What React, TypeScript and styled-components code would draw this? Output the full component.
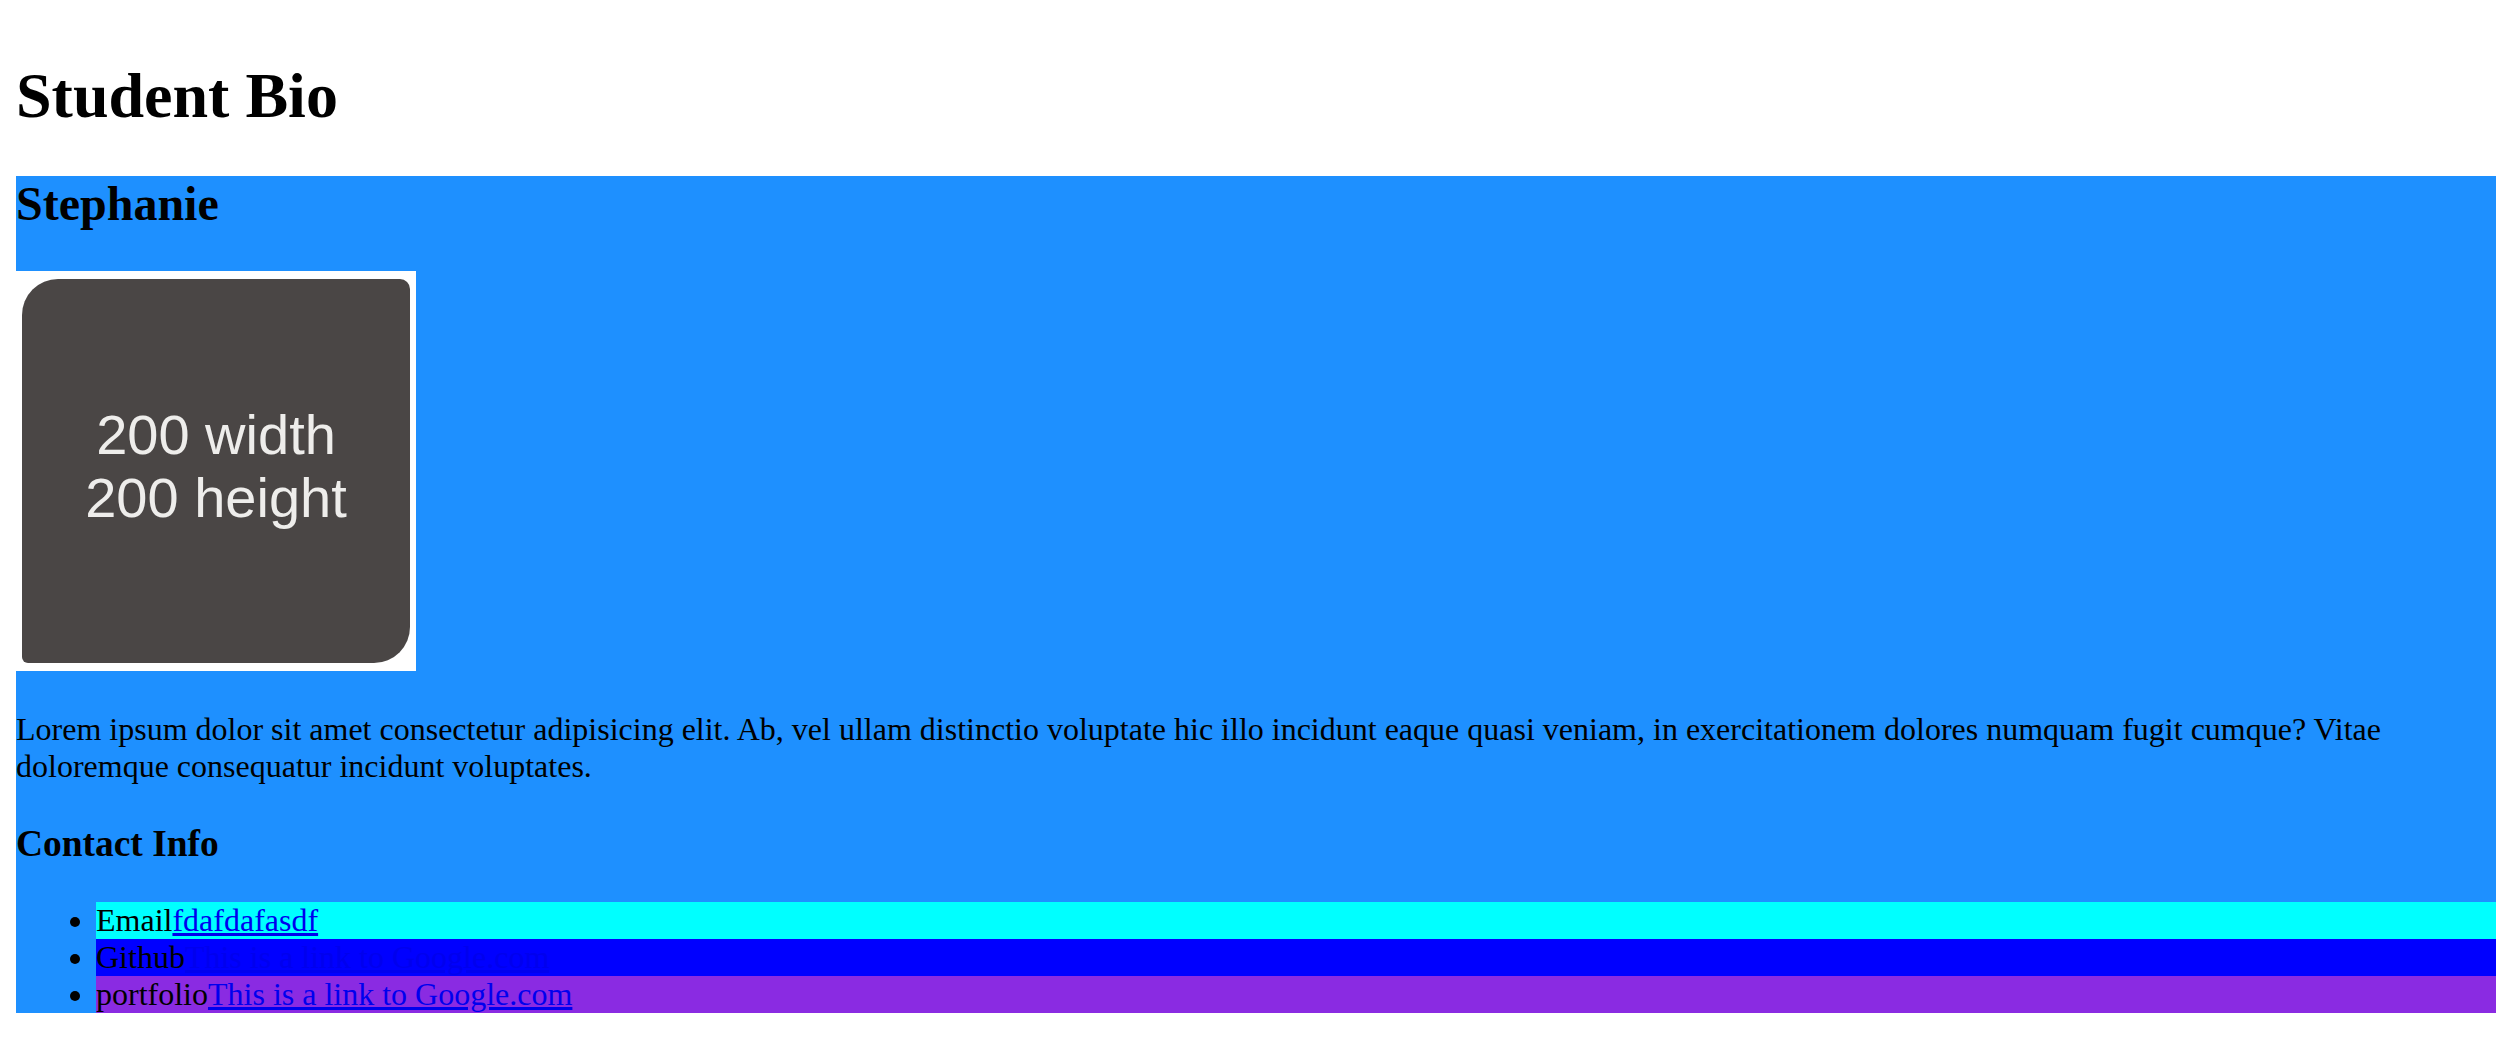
import React from "react";
import styled, { createGlobalStyle } from "styled-components";

const GlobalStyle = createGlobalStyle`
  html, body {
    margin: 0;
    padding: 0;
    background: #ffffff;
  }
  body {
    font-family: "Liberation Serif", "Times New Roman", serif;
    font-size: 32px;
    color: #000000;
  }
`;

const Page = styled.div`
  padding: 16px;
`;

const Title = styled.h1`
  font-size: 64px;
  font-weight: bold;
  margin: 42.88px 0;
`;

const Card = styled.section`
  background: #1e90ff;
`;

const Name = styled.h2`
  font-size: 48px;
  font-weight: bold;
  margin: 39.84px 0;
`;

const PhotoLine = styled.div``;

const Photo = styled.div`
  display: inline-block;
  vertical-align: baseline;
  overflow: hidden;
  width: 400px;
  height: 400px;
  background: #ffffff;
  box-sizing: border-box;
  padding: 8px 6px 8px 6px;
`;

const PhotoFace = styled.div`
  width: 100%;
  height: 100%;
  background: #4a4645;
  border-radius: 36px 10px 36px 6px;
  display: flex;
  flex-direction: column;
  align-items: center;
  justify-content: center;
  font-family: "Liberation Sans", Arial, sans-serif;
  font-size: 56px;
  line-height: 63px;
  color: #eeedeb;
  padding-bottom: 10px;
  box-sizing: border-box;
`;

const Bio = styled.p`
  margin: 32px 0;
`;

const Subheading = styled.h3`
  font-size: 37.44px;
  font-weight: bold;
  margin: 37.44px 0;
`;

const ContactList = styled.ul`
  margin: 32px 0;
  padding-left: 80px;
  list-style: disc;
`;

const ContactItem = styled.li<{ $bg: string }>`
  background: ${(p) => p.$bg};
`;

const Link = styled.a`
  color: #0000ee;
  text-decoration: underline;
`;

export default function App() {
  return (
    <>
      <GlobalStyle />
      <Page>
        <Title>Student Bio</Title>
        <Card>
          <Name>Stephanie</Name>
          <PhotoLine>
            <Photo>
              <PhotoFace>
                <span>200 width</span>
                <span>200 height</span>
              </PhotoFace>
            </Photo>
          </PhotoLine>
          <Bio>
            Lorem ipsum dolor sit amet consectetur adipisicing elit. Ab, vel ullam
            distinctio voluptate hic illo incidunt eaque quasi veniam, in
            exercitationem dolores numquam fugit cumque? Vitae doloremque
            consequatur incidunt voluptates.
          </Bio>
          <Subheading>Contact Info</Subheading>
          <ContactList>
            <ContactItem $bg="#00ffff">
              Email<Link href="#">fdafdafasdf</Link>
            </ContactItem>
            <ContactItem $bg="#0000ff">
              Github<Link href="#">This is a link to Google.com</Link>
            </ContactItem>
            <ContactItem $bg="#8a2be2">
              portfolio<Link href="#">This is a link to Google.com</Link>
            </ContactItem>
          </ContactList>
        </Card>
      </Page>
    </>
  );
}
